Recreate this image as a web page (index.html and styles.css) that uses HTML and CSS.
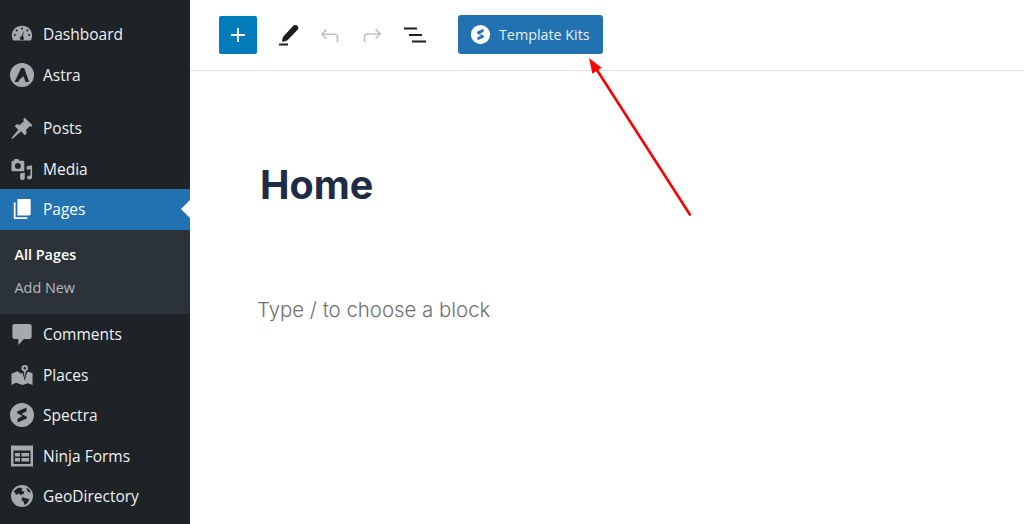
FILE: index.html
```html
<!DOCTYPE html>
<html lang="en">
<head>
    <meta charset="UTF-8">
    <title>Edit Page</title>
    <link rel="stylesheet" href="styles.css">
</head>
<body>
    <aside class="sidebar">
        <ul class="menu">
            <li class="menu-item">
                <svg class="menu-icon" viewBox="0 0 24 24"><path fill-rule="evenodd" d="M12 3C5.600 3 1 7.500 1 13.500c0 2 .4 3.600 1 5 .2.400.6.500 1 .5h18c.4 0 .8-.1 1-.5.6-1.400 1-3 1-5C23 7.500 18.400 3 12 3zM12 5a1.100 1.100 0 1 1 0 2.200A1.100 1.100 0 0 1 12 5zM6.200 7.200a1.100 1.100 0 1 1 0 2.200 1.100 1.100 0 0 1 0-2.200zM17.800 7.200a1.100 1.100 0 1 1 0 2.200 1.100 1.100 0 0 1 0-2.200zM4.200 12a1.100 1.100 0 1 1 0 2.200 1.100 1.100 0 0 1 0-2.200zM19.800 12a1.100 1.100 0 1 1 0 2.200 1.100 1.100 0 0 1 0-2.200zM14 8.500l-1 6.100c.7.400 1.200 1.100 1.200 1.900 0 1.200-1 2.200-2.200 2.200s-2.200-1-2.200-2.200c0-1 .7-1.900 1.700-2.100z"/></svg>
                <span>Dashboard</span>
            </li>
            <li class="menu-item menu-item-last">
                <svg class="menu-icon menu-icon-big" viewBox="0 0 24 24"><path fill-rule="evenodd" d="M12 0a12 12 0 1 0 0 24 12 12 0 0 0 0-24zM11 5h3.200l5 14h-3.600l-2-5.800-3.800 3L8.200 19H4.600z"/></svg>
                <span>Astra</span>
            </li>
            <li class="menu-item">
                <svg class="menu-icon" viewBox="0 0 24 24"><path d="M14.500 .5l9 8.500-1.500 1.500-1.500-.5-4 4 .5 4-2 2-4-4.500L1.500 24 .5 23l7.500-9-4-4 2-2 4 .5 4-4-.5-1.500z"/></svg>
                <span>Posts</span>
            </li>
            <li class="menu-item">
                <svg class="menu-icon" viewBox="0 0 24 24"><path fill-rule="evenodd" d="M4 1h4l1 2h4c.8 0 1.500.7 1.500 1.500V13c0 .8-.7 1.500-1.500 1.500H2c-.8 0-1.500-.7-1.500-1.500V4.500C.5 3.700 1.200 3 2 3h1zM7.500 5.500a3.200 3.200 0 1 0 0 6.400 3.200 3.200 0 0 0 0-6.400zM23 8v13c0 1.500-1.300 2.500-2.800 2.500s-2.700-.9-2.700-2.200 1.200-2.300 2.700-2.300c.4 0 .8.100 1 .2V12l-4 1V9zM10 17l5-1.300V22c0 1.200-1.200 2-2.600 2S10 23.100 10 22z"/></svg>
                <span>Media</span>
            </li>
            <li class="menu-item menu-item-active">
                <svg class="menu-icon" viewBox="0 0 24 24"><path d="M7 1h14.500v16.500c0 .8-.7 1.500-1.500 1.500H7z"/><path d="M3 5h2v16h13v2H4c-.6 0-1-.4-1-1z"/></svg>
                <span>Pages</span>
            </li>
            <li class="submenu">
                <a class="submenu-item submenu-current">All Pages</a>
                <a class="submenu-item">Add New</a>
            </li>
            <li class="menu-item">
                <svg class="menu-icon" viewBox="0 0 24 24"><path d="M4 1h16c1.500 0 2.500 1 2.500 2.500V15c0 1.500-1 2.500-2.500 2.500h-6l-6 6.500v-6.500H4c-1.500 0-2.500-1-2.500-2.500V3.500C1.500 2 2.500 1 4 1z"/></svg>
                <span>Comments</span>
            </li>
            <li class="menu-item">
                <svg class="menu-icon" viewBox="0 0 24 24"><path fill-rule="evenodd" d="M15 1a3.600 3.600 0 0 1 3.600 3.600c0 1.700-1.200 3.100-2.700 3.500l-.9 8-.9-8a3.600 3.600 0 0 1 .9-7.100zM15 3.200a1.400 1.400 0 1 0 0 2.800 1.400 1.400 0 0 0 0-2.800zM.5 10.500L7 8l4 2.500 1.500-1.200 2.500 9 2.500-9 1.500-.800 4.500 1.500V23l-5-2-6 2-7-2.500-5 2.500z"/></svg>
                <span>Places</span>
            </li>
            <li class="menu-item">
                <svg class="menu-icon menu-icon-big" viewBox="0 0 24 24"><path fill-rule="evenodd" d="M12 0a12 12 0 1 0 0 24 12 12 0 0 0 0-24zM16.500 4.500v3.800L11.500 11l4.500 2.300c.9.500 1.100 1.700.4 2.400L7.500 19.500v-3.800L12.500 13 8 10.700c-.9-.5-1.100-1.700-.4-2.400z"/></svg>
                <span>Spectra</span>
            </li>
            <li class="menu-item">
                <svg class="menu-icon menu-icon-big" viewBox="0 0 24 24"><path fill-rule="evenodd" d="M1 1.500h22v21H1zM3.500 6.500v13.500h17V6.500zM5 9h5v3.500H5zM11.500 9H19v3.500h-7.500zM5 14h5v3.500H5zM11.500 14H19v3.500h-7.500z"/></svg>
                <span>Ninja Forms</span>
            </li>
            <li class="menu-item">
                <svg class="menu-icon menu-icon-big" viewBox="0 0 24 24"><path fill-rule="evenodd" d="M12 1a11 11 0 1 0 0 22 11 11 0 0 0 0-22zM9 3.500l3.500 1-1 2.500 3 .5-1 2.500-3 1-2-1.500-2.500 1.500L5 8.500 3.500 8C5 5.800 6.800 4.200 9 3.500zM12.500 13l4 1.500 3 .5-2 4-3 2-1-3.500-2-1.500zM16.500 3.800c2 .9 3.500 2.500 4.500 4.700L18 8l-1-2z"/></svg>
                <span>GeoDirectory</span>
            </li>
        </ul>
    </aside>

    <main class="editor">
        <header class="toolbar">
            <button class="inserter">
                <svg viewBox="0 0 24 24" width="24" height="24"><path d="M11 5h2v6h6v2h-6v6h-2v-6H5v-2h6z"/></svg>
            </button>
            <svg class="tool tool-pen" viewBox="0 0 24 24"><path d="M17.500 2.500c1.200-.9 2.900-.7 4 .3 1.100 1.100 1.100 2.700.1 3.900l-9.600 10c-1.300 1.200-3.300 1.800-6 2 .2-2.700.9-4.800 2.300-6.100z"/><path d="M3 20.500h9v2H3z"/></svg>
            <svg class="tool tool-off" viewBox="0 0 24 24"><path d="M18.300 11.700c-.6-.6-1.400-.9-2.300-.9H6.700l2.900-2.900-1.100-1-4.500 4.500.5.500 4 4 1.100-1-2.900-2.900H16c.5 0 .9.200 1.200.5.300.3.500.8.500 1.300V18h1.500v-4.100c0-.9-.3-1.700-.9-2.200z"/></svg>
            <svg class="tool tool-off tool-redo" viewBox="0 0 24 24"><path d="M15.600 6.500l-1.100 1 2.900 2.900H8c-.9 0-1.700.3-2.300.9-.6.600-.9 1.400-.9 2.200V18h1.500v-4.500c0-.5.200-.9.500-1.300.3-.3.700-.5 1.200-.5h9.400l-2.900 2.900 1.100 1 4.500-4.500z"/></svg>
            <svg class="tool tool-list" viewBox="0 0 24 24"><path d="M1 4.500h13v2H1zM6 11h13v2H6zM9 17.500h14v2H9z"/></svg>
            <button class="kits-button">
                <svg viewBox="0 0 24 24" width="21" height="21"><path fill="#fff" fill-rule="evenodd" d="M12 1a11 11 0 1 0 0 22 11 11 0 0 0 0-22zM15.500 5.500v3.300L11.200 11l4 2c.9.500 1.100 1.700.4 2.400L8.500 18.500v-3.300l4.300-2.200-4-2c-.9-.5-1.100-1.700-.4-2.400z"/></svg>
                <span>Template Kits</span>
            </button>
        </header>
        <div class="canvas">
            <h1 class="page-title">Home</h1>
            <p class="block-hint">Type / to choose a block</p>
        </div>
    </main>

    <svg class="arrow" viewBox="0 0 1024 524" width="1024" height="524">
        <path d="M690.500 215.500L595 67" stroke="#ff0000" stroke-width="2.600" fill="none"/>
        <path d="M589 58l12.600 9.700-9.200 6z" fill="#ff0000"/>
    </svg>
</body>
</html>
```

FILE: styles.css
```css
html, body {
    height: 100%;
}

body {
    margin: 0;
    display: flex;
    overflow: hidden;
    background-color: #fff;
    font-family: "Open Sans", sans-serif;
}

.sidebar {
    width: 190px;
    flex-shrink: 0;
    background-color: #1d2327;
}

.menu {
    list-style: none;
    margin: 0;
    padding: 14px 0 0;
}

.menu-item {
    display: flex;
    align-items: center;
    height: 40.500px;
    color: #f0f0f1;
    font-size: 15.500px;
}

.menu-item span {
    margin-left: 43px;
}

.menu-item-last {
    margin-bottom: 13px;
}

.menu-icon {
    position: absolute;
    left: 11px;
    width: 22px;
    height: 22px;
    fill: #a7aaad;
}

.menu-icon-big {
    left: 10px;
    width: 24px;
    height: 24px;
}

.menu-item-active {
    position: relative;
    background-color: #2271b1;
    color: #fff;
}

.menu-item-active .menu-icon {
    fill: #fff;
}

.menu-item-active::after {
    content: "";
    position: absolute;
    right: 0;
    top: 11px;
    border: 9px solid transparent;
    border-right-color: #fff;
    border-left-width: 0;
}

.submenu {
    display: flex;
    flex-direction: column;
    height: 84.500px;
    padding-top: 8px;
    box-sizing: border-box;
    background-color: #2c3338;
}

.submenu-item {
    height: 33px;
    line-height: 33px;
    padding-left: 14.500px;
    font-size: 14.400px;
    color: #b4b9be;
}

.submenu-current {
    color: #fff;
    font-weight: 600;
}

.editor {
    flex: 1;
}

.toolbar {
    display: flex;
    align-items: center;
    height: 71px;
    padding-left: 28.500px;
    box-sizing: border-box;
    border-bottom: 1px solid #e2e2e2;
}

.inserter {
    display: flex;
    align-items: center;
    justify-content: center;
    width: 38px;
    height: 38px;
    padding: 0;
    border: none;
    border-radius: 2px;
    background-color: #007cba;
}

.inserter svg {
    fill: #fff;
}

.tool {
    width: 28px;
    height: 28px;
    margin-left: 14px;
    fill: #1e1e1e;
}

.tool-off {
    fill: #c4c4c4;
}

.tool-pen {
    width: 24px;
    height: 24px;
    margin-left: 19px;
}

.tool-pen + .tool-off {
    margin-left: 16.500px;
}

.tool-list {
    width: 24px;
    height: 24px;
    margin-left: 17px;
    margin-right: 31px;
}

.kits-button {
    display: flex;
    align-items: center;
    gap: 8px;
    width: 145px;
    height: 39px;
    margin-bottom: 1px;
    padding: 0 0 0 12px;
    border: none;
    border-radius: 3px;
    background-color: #2271b1;
    color: #e8f0f6;
    font-family: "Open Sans", sans-serif;
    font-size: 14.300px;
}

.canvas {
    padding: 89px 0 0 70px;
}

.page-title {
    margin: 0;
    color: #1e2d45;
    font-family: Inter, sans-serif;
    font-size: 39.500px;
    font-weight: 700;
    line-height: 50px;
}

.block-hint {
    margin: 86px 0 0 -3px;
    color: #6f6f6f;
    font-family: Inter, sans-serif;
    font-size: 20.400px;
    font-weight: 300;
    line-height: 28px;
}

.arrow {
    position: absolute;
    left: 0;
    top: 0;
    pointer-events: none;
}
```
